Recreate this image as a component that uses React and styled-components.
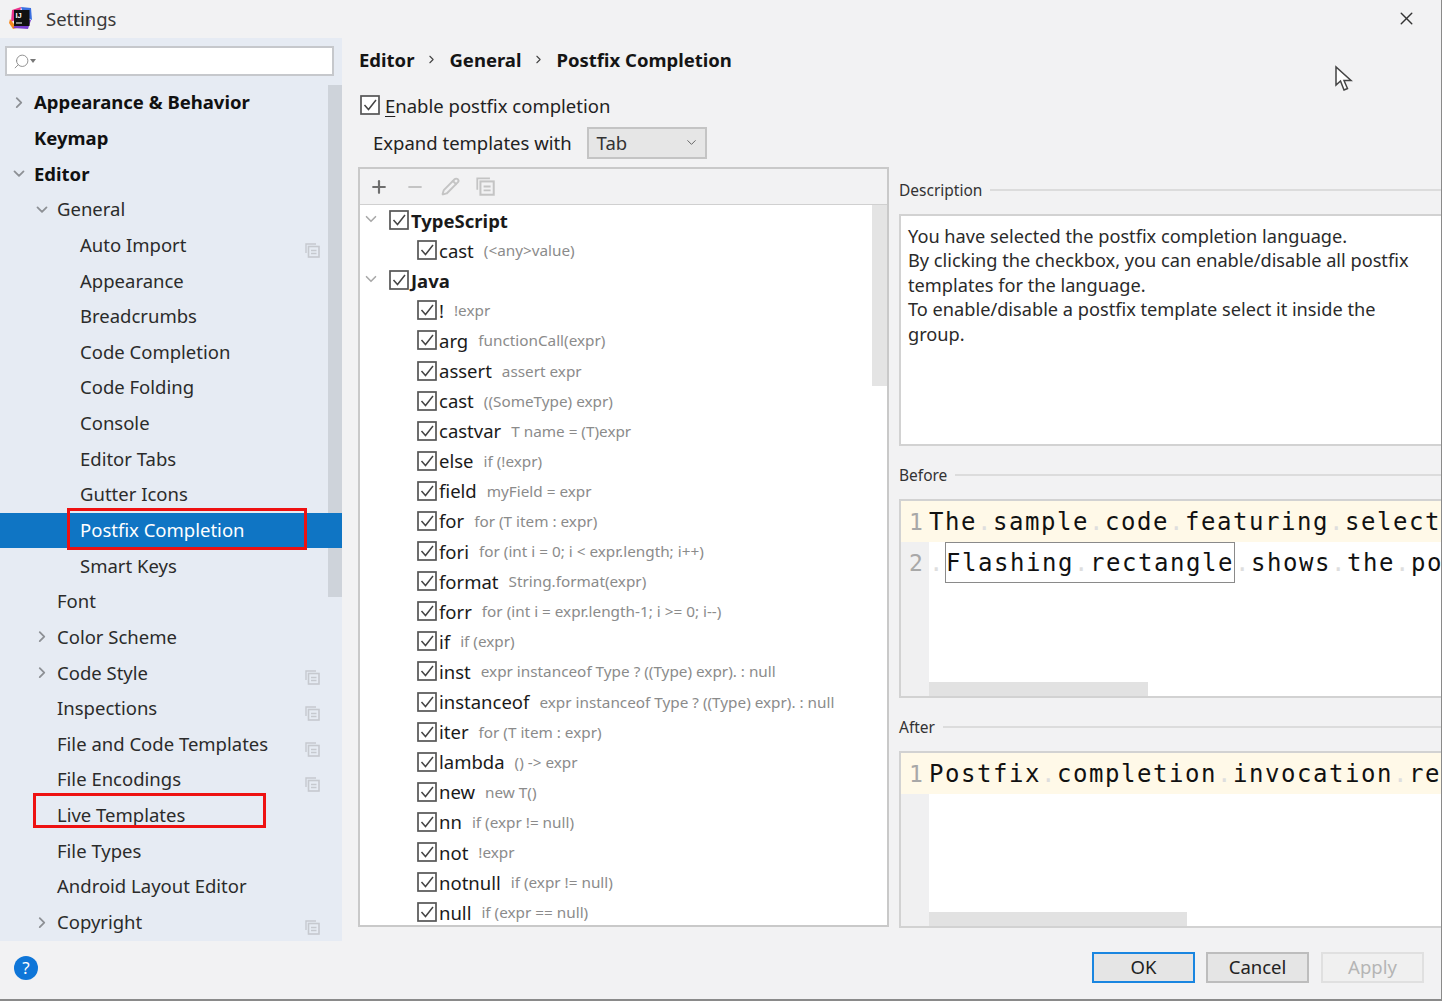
import styled, { createGlobalStyle } from "styled-components";
import { Plus, Minus, Pencil, Search, X, ChevronRight, ChevronDown } from "lucide-react";

const GlobalStyle = createGlobalStyle`
  html, body { margin: 0; padding: 0; background: #f2f2f3; }
  * { box-sizing: border-box; }
`;

const Window = styled.div`
  position: relative;
  width: 1442px;
  height: 1001px;
  display: flex;
  flex-direction: column;
  overflow: hidden;
  background: #f2f2f3;
  font-family: "Noto Sans", "Open Sans", sans-serif;
  font-size: 18.5px;
  color: #222;
  border-right: 1px solid #8a8a8a;
  border-bottom: 2px solid #8a8a8a;
`;

const TitleBar = styled.div`
  height: 38px;
  flex: none;
  display: flex;
  align-items: center;
  padding: 0 24px 2px 9px;
  gap: 13px;
`;

const Title = styled.span`
  flex: 1;
  color: #3a3a3a;
`;

const Main = styled.div`
  height: 903px;
  flex: none;
  display: flex;
`;

const Sidebar = styled.div`
  position: relative;
  width: 342px;
  flex: none;
  background: #e6ebf3;
  padding-top: 8px;
  overflow: hidden;
`;

const SearchBox = styled.div`
  width: 329px;
  height: 30px;
  margin: 0 0 9px 5px;
  background: #fff;
  border: 2px solid #c6c8cc;
  display: flex;
  align-items: center;
  padding-left: 6px;
  color: #8a8a8a;
`;

const Caret = styled.span`
  width: 0;
  height: 0;
  border-left: 3px solid transparent;
  border-right: 3px solid transparent;
  border-top: 4px solid #777;
`;

const SideScroll = styled.div`
  position: absolute;
  left: 328px;
  top: 47px;
  width: 14px;
  height: 512px;
  background: #ced3da;
`;

const TreeRow = styled.div`
  position: relative;
  z-index: 1;
  height: 35.65px;
  display: flex;
  align-items: center;
  padding-left: ${({ $level }) => 34 + $level * 23}px;
  padding-bottom: 2px;
  font-weight: ${({ $bold }) => ($bold ? 700 : 400)};
  color: ${({ $selected, $bold }) => ($selected ? "#fff" : $bold ? "#111" : "#2b2b2b")};
  background: ${({ $selected }) => ($selected ? "#0f75c4" : "transparent")};
`;

const Arrow = styled.span`
  position: absolute;
  left: ${({ $level }) => 10 + $level * 23}px;
  top: 50%;
  transform: translateY(-52%);
  display: flex;
  color: #8d9095;
`;

const ConfigIcon = styled.svg`
  position: absolute;
  left: 305px;
  top: 10px;
`;

const RedBox = styled.div`
  position: absolute;
  left: ${({ $left }) => $left}px;
  width: ${({ $width }) => $width}px;
  top: ${({ $top }) => $top}px;
  height: ${({ $height }) => $height}px;
  border: 3px solid #ee1111;
  pointer-events: none;
`;

const Content = styled.div`
  flex: 1;
  padding: 0 14px 14px 16px;
  display: flex;
  flex-direction: column;
`;

const Crumbs = styled.div`
  height: 57px;
  flex: none;
  display: flex;
  align-items: center;
  padding: 0 0 14px 1px;
  font-weight: 700;
  color: #151515;
`;

const CrumbSep = styled.span`
  display: flex;
  margin: 0 11px 0 11px;
  color: #444;
`;

const EnableRow = styled.div`
  display: flex;
  align-items: center;
  height: 20px;
  padding-left: 2px;
  gap: 5px;
  flex: none;
`;

const Underlined = styled.span`
  text-decoration: underline;
  text-underline-offset: 3px;
  text-decoration-thickness: 1px;
`;

const ExpandRow = styled.div`
  display: flex;
  align-items: center;
  height: 31px;
  margin-top: 12px;
  padding-left: 15px;
  gap: 15px;
  flex: none;
`;

const Select = styled.div`
  width: 120px;
  height: 32px;
  background: #e6e6e6;
  border: 2px solid #c4c4c4;
  display: flex;
  align-items: center;
  justify-content: space-between;
  padding: 0 6px 0 8px;
  color: #333;
`;

const Panels = styled.div`
  flex: 1;
  display: flex;
  gap: 10px;
  margin-top: 9px;
  min-height: 0;
`;

const TemplatesPanel = styled.div`
  position: relative;
  width: 531px;
  flex: none;
  border: 2px solid #c9c9c9;
  background: #fff;
  overflow: hidden;
`;

const Toolbar = styled.div`
  height: 36px;
  background: #f2f2f3;
  border-bottom: 1px solid #d0d0d0;
  display: flex;
  align-items: center;
  padding-left: 9px;
  gap: 16px;
  color: #bdbdbd;
`;

const ToolScroll = styled.div`
  position: absolute;
  left: 512px;
  top: 36px;
  width: 15px;
  height: 181px;
  background: #e4e4e4;
`;

const TplRow = styled.div`
  height: 30.1px;
  display: flex;
  align-items: center;
  position: relative;
  padding-left: ${({ $group }) => ($group ? 29 : 57)}px;
  gap: 2px;
  white-space: nowrap;
`;

const TplArrow = styled.span`
  position: absolute;
  left: 2px;
  top: 5px;
  display: flex;
  color: #a9a9a9;
`;

const TplName = styled.span`
  font-weight: ${({ $bold }) => ($bold ? 700 : 400)};
  color: #1a1a1a;
`;

const TplHint = styled.span`
  margin-left: 8px;
  font-size: 15.3px;
  color: #8b8b8b;
`;

const RightCol = styled.div`
  flex: 1;
  display: flex;
  flex-direction: column;
  min-width: 0;
`;

const GroupTitle = styled.div`
  height: 24px;
  margin: ${({ $top }) => $top}px 0 12px;
  display: flex;
  align-items: center;
  gap: 8px;
  font-size: 15.5px;
  color: #333;
  flex: none;
  padding-right: 4px;
`;

const TitleLine = styled.span`
  flex: 1;
  height: 2px;
  background: #dcdcdc;
`;

const DescBox = styled.div`
  height: 232px;
  flex: none;
  background: #fff;
  border: 2px solid #d2d2d2;
  padding: 8px 7px;
  font-size: 18.2px;
  line-height: 24.4px;
  color: #2a2a2a;
`;

const EditorBox = styled.div`
  position: relative;
  height: ${({ $height }) => $height}px;
  flex: none;
  background: #fff;
  border: 2px solid #d2d2d2;
  overflow: hidden;
  display: flex;
  flex-direction: column;
`;

const Gutter = styled.div`
  position: absolute;
  left: 0;
  top: 0;
  bottom: 0;
  width: 28px;
  background: #f0f0f1;
`;

const CodeLine = styled.div`
  position: relative;
  height: 41px;
  flex: none;
  display: flex;
  align-items: center;
  padding-left: 28px;
  font-family: "DejaVu Sans Mono", "Liberation Mono", monospace;
  font-size: 24px;
  letter-spacing: 1.55px;
  white-space: pre;
  color: #111;
  background: ${({ $current }) => ($current ? "#fff9e8" : "transparent")};
`;

const LineNo = styled.span`
  position: absolute;
  left: 8px;
  color: #a8a8a8;
  letter-spacing: 0;
  font-size: 23px;
`;

const WhiteDot = styled.span`
  color: #dedede;
`;

const FlashBox = styled.span`
  border: 1.5px solid #8a8a8a;
  height: 41px;
  display: inline-flex;
  align-items: center;
`;

const HScroll = styled.div`
  position: absolute;
  left: 28px;
  bottom: 0;
  width: ${({ $width }) => $width}px;
  height: 14px;
  background: #e2e2e2;
`;

const Footer = styled.div`
  flex: 1;
  display: flex;
  align-items: center;
  padding: 0 17px 5px 14px;
`;

const Help = styled.div`
  width: 24px;
  height: 24px;
  border-radius: 50%;
  background: #0f76d8;
  color: #fff;
  font-size: 17px;
  display: flex;
  align-items: center;
  justify-content: center;
  margin-right: auto;
`;

const Button = styled.div`
  width: 103px;
  height: 31px;
  margin-left: ${({ $gap }) => $gap}px;
  display: flex;
  align-items: center;
  justify-content: center;
  padding-bottom: 2px;
  background: ${({ $disabled }) => ($disabled ? "#f0f0f0" : "#e5e5e5")};
  border: 2px solid ${({ $focus, $disabled }) =>
    $focus ? "#1a86e0" : $disabled ? "#e0e0e0" : "#bdbdbd"};
  outline: ${({ $focus }) => ($focus ? "1px solid #1a86e0" : "none")};
  outline-offset: -2px;
  color: ${({ $disabled }) => ($disabled ? "#b5b5b5" : "#222")};
`;

const Pointer = styled.svg`
  position: absolute;
  left: 1334px;
  top: 65px;
`;

const treeItems = [
  { label: "Appearance & Behavior", level: 0, bold: true, arrow: "right" },
  { label: "Keymap", level: 0, bold: true },
  { label: "Editor", level: 0, bold: true, arrow: "down" },
  { label: "General", level: 1, arrow: "down" },
  { label: "Auto Import", level: 2, config: true },
  { label: "Appearance", level: 2 },
  { label: "Breadcrumbs", level: 2 },
  { label: "Code Completion", level: 2 },
  { label: "Code Folding", level: 2 },
  { label: "Console", level: 2 },
  { label: "Editor Tabs", level: 2 },
  { label: "Gutter Icons", level: 2 },
  { label: "Postfix Completion", level: 2, selected: true },
  { label: "Smart Keys", level: 2 },
  { label: "Font", level: 1 },
  { label: "Color Scheme", level: 1, arrow: "right" },
  { label: "Code Style", level: 1, arrow: "right", config: true },
  { label: "Inspections", level: 1, config: true },
  { label: "File and Code Templates", level: 1, config: true },
  { label: "File Encodings", level: 1, config: true },
  { label: "Live Templates", level: 1 },
  { label: "File Types", level: 1 },
  { label: "Android Layout Editor", level: 1 },
  { label: "Copyright", level: 1, arrow: "right", config: true },
];

const templates = [
  { name: "TypeScript", group: true },
  { name: "cast", hint: "(<any>value)" },
  { name: "Java", group: true },
  { name: "!", hint: "!expr" },
  { name: "arg", hint: "functionCall(expr)" },
  { name: "assert", hint: "assert expr" },
  { name: "cast", hint: "((SomeType) expr)" },
  { name: "castvar", hint: "T name = (T)expr" },
  { name: "else", hint: "if (!expr)" },
  { name: "field", hint: "myField = expr" },
  { name: "for", hint: "for (T item : expr)" },
  { name: "fori", hint: "for (int i = 0; i < expr.length; i++)" },
  { name: "format", hint: "String.format(expr)" },
  { name: "forr", hint: "for (int i = expr.length-1; i >= 0; i--)" },
  { name: "if", hint: "if (expr)" },
  { name: "inst", hint: "expr instanceof Type ? ((Type) expr). : null" },
  { name: "instanceof", hint: "expr instanceof Type ? ((Type) expr). : null" },
  { name: "iter", hint: "for (T item : expr)" },
  { name: "lambda", hint: "() -> expr" },
  { name: "new", hint: "new T()" },
  { name: "nn", hint: "if (expr != null)" },
  { name: "not", hint: "!expr" },
  { name: "notnull", hint: "if (expr != null)" },
  { name: "null", hint: "if (expr == null)" },
];

function CheckBox() {
  return (
    <svg width="20" height="20" viewBox="0 0 20 20" style={{ flex: "none" }}>
      <rect x="1" y="1" width="18" height="18" fill="#fff" stroke="#555" strokeWidth="1.7" />
      <path d="M4.5 10 L8.5 14.5 L16 5" fill="none" stroke="#444" strokeWidth="1.5" />
    </svg>
  );
}

function CopyIcon({ size = 15, color = "#c6c9cf" }) {
  return (
    <svg width={size} height={size} viewBox="0 0 15 15">
      <path d="M1 10V1h10" fill="none" stroke={color} strokeWidth="1.4" />
      <rect x="3.5" y="3.5" width="10.5" height="10.5" fill="none" stroke={color} strokeWidth="1.6" />
      <path d="M6 7.5h5.5M6 10.5h5.5" stroke={color} strokeWidth="1.4" />
    </svg>
  );
}

function AppLogo() {
  return (
    <svg width="24" height="24" viewBox="0 0 24 24">
      <path d="M3 4 L12 1 L10 12 L2 16Z" fill="#e8348b" />
      <path d="M12 1 L22 2 L23 14 L15 10Z" fill="#3a6fe0" />
      <path d="M1 13 L8 22 L4 23 L0 17Z" fill="#f78b1f" />
      <path d="M4 22 L19 23 L22 14 L12 12Z" fill="#7a3fd0" />
      <rect x="5" y="4" width="15.5" height="16" fill="#111" />
      <text x="6.5" y="12" fontSize="7.5" fontWeight="700" fill="#fff" fontFamily="Liberation Sans">IJ</text>
      <rect x="7" y="16.5" width="6" height="1" fill="#fff" />
    </svg>
  );
}

function Code({ text }) {
  // spaces show up as faint dots in the preview editors
  return text.split(" ").map((word, i) => (
    <span key={i}>
      {i > 0 && <WhiteDot>.</WhiteDot>}
      {word}
    </span>
  ));
}

export default function App() {
  return (
    <Window>
      <GlobalStyle />
      <TitleBar>
        <AppLogo />
        <Title>Settings</Title>
        <X size={21} strokeWidth={1.6} color="#333" />
      </TitleBar>
      <Main>
        <Sidebar>
          <SearchBox>
            <Search size={17} strokeWidth={1.3} style={{ transform: "scaleX(-1)" }} />
            <Caret />
          </SearchBox>
          <SideScroll />
          {treeItems.map((item) => (
            <TreeRow key={item.label} $level={item.level} $bold={item.bold} $selected={item.selected}>
              {item.arrow && (
                <Arrow $level={item.level}>
                  {item.arrow === "right" ? (
                    <ChevronRight size={18} strokeWidth={2.4} />
                  ) : (
                    <ChevronDown size={18} strokeWidth={2.4} />
                  )}
                </Arrow>
              )}
              {item.label}
              {item.config && (
                <ConfigIcon as="span">
                  <CopyIcon />
                </ConfigIcon>
              )}
              {item.selected && <RedBox $left={67} $width={240} $top={-5} $height={42} />}
              {item.label === "Live Templates" && <RedBox $left={33} $width={233} $top={-5} $height={35} />}
            </TreeRow>
          ))}
        </Sidebar>
        <Content>
          <Crumbs>
            Editor
            <CrumbSep>
              <ChevronRight size={13} strokeWidth={2} />
            </CrumbSep>
            General
            <CrumbSep>
              <ChevronRight size={13} strokeWidth={2} />
            </CrumbSep>
            Postfix Completion
          </Crumbs>
          <EnableRow>
            <CheckBox />
            <span>
              <Underlined>E</Underlined>nable postfix completion
            </span>
          </EnableRow>
          <ExpandRow>
            <span>Expand templates with</span>
            <Select>
              Tab
              <ChevronDown size={15} strokeWidth={1.6} color="#666" />
            </Select>
          </ExpandRow>
          <Panels>
            <TemplatesPanel>
              <Toolbar>
                <Plus size={20} strokeWidth={2.6} color="#6e6e6e" />
                <Minus size={20} strokeWidth={2.6} color="#c4c4c4" />
                <Pencil size={19} strokeWidth={2.4} color="#c4c4c4" />
                <CopyIcon size={19} color="#c4c4c4" />
              </Toolbar>
              <ToolScroll />
              {templates.map((t, i) => (
                <TplRow key={i} $group={t.group}>
                  {t.group && (
                    <TplArrow>
                      <ChevronDown size={18} strokeWidth={2.2} />
                    </TplArrow>
                  )}
                  <CheckBox />
                  <TplName $bold={t.group}>{t.name}</TplName>
                  {t.hint && <TplHint>{t.hint}</TplHint>}
                </TplRow>
              ))}
            </TemplatesPanel>
            <RightCol>
              <GroupTitle $top={11}>
                Description
                <TitleLine />
              </GroupTitle>
              <DescBox>
                You have selected the postfix completion language.
                <br />
                By clicking the checkbox, you can enable/disable all postfix
                <br />
                templates for the language.
                <br />
                To enable/disable a postfix template select it inside the
                <br />
                group.
              </DescBox>
              <GroupTitle $top={17}>
                Before
                <TitleLine />
              </GroupTitle>
              <EditorBox $height={199}>
                <Gutter />
                <CodeLine $current>
                  <LineNo>1</LineNo>
                  <Code text="The sample code featuring selection" />
                </CodeLine>
                <CodeLine>
                  <LineNo>2</LineNo>
                  <WhiteDot>.</WhiteDot>
                  <FlashBox>
                    <Code text="Flashing rectangle" />
                  </FlashBox>
                  <WhiteDot>.</WhiteDot>
                  <Code text="shows the position" />
                </CodeLine>
                <HScroll $width={219} />
              </EditorBox>
              <GroupTitle $top={17}>
                After
                <TitleLine />
              </GroupTitle>
              <EditorBox $height={177}>
                <Gutter />
                <CodeLine $current>
                  <LineNo>1</LineNo>
                  <Code text="Postfix completion invocation result" />
                </CodeLine>
                <HScroll $width={258} />
              </EditorBox>
            </RightCol>
          </Panels>
        </Content>
      </Main>
      <Footer>
        <Help>?</Help>
        <Button $focus>OK</Button>
        <Button $gap={11}>Cancel</Button>
        <Button $gap={12} $disabled>
          Apply
        </Button>
      </Footer>
      <Pointer width="20" height="28" viewBox="0 0 20 28">
        <path d="M2 2 L2 20 L6.5 16 L10 25 L13.5 23.5 L10 15.5 L17 15.5 Z" fill="#fff" stroke="#444" strokeWidth="1.5" />
      </Pointer>
    </Window>
  );
}
